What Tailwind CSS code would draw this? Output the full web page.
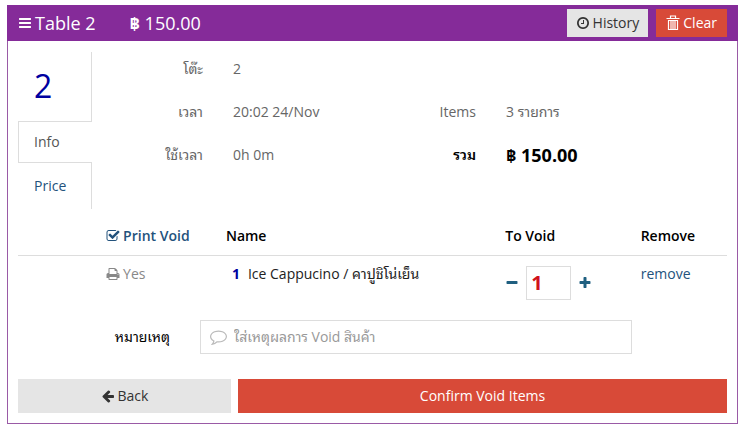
<!DOCTYPE html>
<html lang="th">
<head>
<meta charset="utf-8">
<meta name="viewport" content="width=device-width, initial-scale=1">
<title>Table 2</title>
<script src="https://cdn.jsdelivr.net/npm/@tailwindcss/browser@4"></script>
</head>
<body class="bg-white px-2 pt-[5px] font-['Open_Sans','Noto_Sans_Thai_Looped','Loma','Waree','Garuda','Noto_Sans',sans-serif] text-sm text-[#666]">
<svg class="hidden" aria-hidden="true">
  <symbol id="bars" viewBox="0 0 1792 1792"><path d="M1664 1344v128q0 26-19 45t-45 19H192q-26 0-45-19t-19-45v-128q0-26 19-45t45-19h1408q26 0 45 19t19 45zm0-512v128q0 26-19 45t-45 19H192q-26 0-45-19t-19-45V832q0-26 19-45t45-19h1408q26 0 45 19t19 45zm0-512v128q0 26-19 45t-45 19H192q-26 0-45-19t-19-45V320q0-26 19-45t45-19h1408q26 0 45 19t19 45z"/></symbol>
  <symbol id="clock" viewBox="0 0 1792 1792"><path d="M1024 544v448q0 14-9 23t-23 9H672q-14 0-23-9t-9-23v-64q0-14 9-23t23-9h224V544q0-14 9-23t23-9h64q14 0 23 9t9 23zm416 352q0-148-73-273t-198-198-273-73-273 73-198 198-73 273 73 273 198 198 273 73 273-73 198-198 73-273zm224 0q0 209-103 385.5T1281.5 1561 896 1664t-385.5-103T231 1281.5 128 896t103-385.5T510.5 231 896 128t385.5 103T1561 510.5 1664 896z"/></symbol>
  <symbol id="check" viewBox="0 0 1792 1792"><path d="M1472 930v318q0 119-84.5 203.5T1184 1536H352q-119 0-203.5-84.5T64 1248V416q0-119 84.5-203.5T352 128h832q63 0 117 25 15 7 18 23 3 17-9 29l-49 49q-10 10-23 10-3 0-9-2-23-6-45-6H352q-66 0-113 47t-47 113v832q0 66 47 113t113 47h832q66 0 113-47t47-113v-254q0-13 9-22l64-64q10-10 23-10 6 0 12 3 20 8 20 29zm231-489l-814 814q-24 24-57 24t-57-24L345 825q-24-24-24-57t24-57l110-110q24-24 57-24t57 24l263 263 647-647q24-24 57-24t57 24l110 110q24 24 24 57t-24 57z"/></symbol>
  <symbol id="print" viewBox="0 0 1792 1792"><path d="M448 1536h896v-256H448v256zm0-640h896V512h-160q-40 0-68-28t-28-68V256H448v640zm1152 64q0-26-19-45t-45-19-45 19-19 45 19 45 45 19 45-19 19-45zm128 0v416q0 13-9.5 22.5t-22.5 9.5h-224v160q0 40-28 68t-68 28H416q-40 0-68-28t-28-68v-160H96q-13 0-22.5-9.5T64 1376V960q0-79 56.5-135.5T256 768h64V224q0-40 28-68t68-28h672q40 0 88 20t76 48l152 152q28 28 48 76t20 88v256h64q79 0 135.5 56.5T1728 960z"/></symbol>
  <symbol id="minus" viewBox="0 0 1792 1792"><path d="M1600 736v192q0 40-28 68t-68 28H288q-40 0-68-28t-28-68V736q0-40 28-68t68-28h1216q40 0 68 28t28 68z"/></symbol>
  <symbol id="plus" viewBox="0 0 1792 1792"><path d="M1600 736v192q0 40-28 68t-68 28h-416v416q0 40-28 68t-68 28H800q-40 0-68-28t-28-68v-416H288q-40 0-68-28t-28-68V736q0-40 28-68t68-28h416V224q0-40 28-68t68-28h192q40 0 68 28t28 68v416h416q40 0 68 28t28 68z"/></symbol>
  <symbol id="back" viewBox="0 0 1792 1792"><path d="M1664 896v128q0 53-32.5 90.5T1547 1152H843l293 294q38 36 38 90t-38 90l-75 76q-37 37-90 37-52 0-91-37L229 1050q-37-37-37-90 0-52 37-91l651-650q38-38 91-38 52 0 90 38l75 74q38 38 38 91t-38 91l-293 293h704q52 0 84.5 37.5T1664 896z"/></symbol>
  <symbol id="comment" viewBox="0 0 1792 1792"><path d="M896 384q-204 0-381.5 69.5T232.5 641 128 896q0 112 71.5 213.5T401 1285l87 50-27 96q-24 91-70 172 152-63 275-171l43-38 57 6q69 8 130 8 204 0 381.5-69.5t282-187.5 104.5-255-104.5-255-282-187.5T896 384zm896 512q0 174-120 321.5t-326 233-450 85.5q-70 0-145-8-198 175-460 242-49 14-114 22h-5q-15 0-27-10.5t-16-27.5v-1q-3-4-.5-12t2-10 4.5-9.5l6-9 7-8.5 8-9q7-8 31-34.5t34.5-38 31-39.5 32.5-51 27-59 26-76q-157-89-247.5-220T0 896q0-130 71-248.5t191-204.5 286-136.5T896 256t348 50.5T1530 443t191 204.5T1792 896z"/></symbol>
  <symbol id="trash" viewBox="0 0 14 16"><path d="M4.5 3V1h5v2M.5 3.5h13M2 5.5h10M2.5 5.5v9h9v-9M5 6v8M7 6v8M9 6v8" fill="none" stroke="currentColor" stroke-width="1.2"/></symbol>
</svg>
<main class="-ml-px border border-[#9a5aa6]">
  <header class="-mx-px -mt-px flex h-9 items-center bg-[#852b99] px-[11px] text-lg font-medium text-white">
    <svg class="mr-[3px] size-[14px] fill-current" aria-hidden="true"><use href="#bars"/></svg>
    <h1>Table 2</h1>
    <span class="ml-[34px]"><b>฿</b> 150.00</span>
    <div class="ml-auto flex gap-2 text-sm">
      <button class="flex h-7 items-center gap-[3px] bg-[#e5e5e5] px-[9px] font-normal text-[#333]"><svg class="size-[14px] fill-current" aria-hidden="true"><use href="#clock"/></svg>History</button>
      <button class="flex h-7 items-center gap-[3px] bg-[#d84a38] px-[10px]"><svg class="h-4 w-[14px]" aria-hidden="true"><use href="#trash"/></svg>Clear</button>
    </div>
  </header>
  <div class="px-[10px] pt-[11px] pb-[10px]">
    <section class="flex">
      <nav class="flex w-[74px] shrink-0 flex-col">
        <div class="h-[69px] border-r border-[#ddd] px-4 pt-4 text-[32px] leading-9 text-[#0000a0]">2</div>
        <a href="#info" class="flex h-[42px] items-center border border-r-0 border-[#ddd] px-[15px] text-[#555]">Info</a>
        <a href="#price" class="flex h-[46px] items-center border-r border-[#ddd] px-4 text-[#23527c]">Price</a>
      </nav>
      <dl class="grid flex-1 auto-rows-[43px] grid-cols-[111px_153fr_60px_221fr] content-start gap-x-[30px] leading-[34px]" id="info">
        <dt class="text-right">โต๊ะ</dt><dd class="col-span-3">2</dd>
        <dt class="text-right">เวลา</dt><dd>20:02 24/Nov</dd>
        <dt class="text-right">Items</dt><dd>3 รายการ</dd>
        <dt class="text-right">ใช้เวลา</dt><dd>0h 0m</dd>
        <dt class="text-right font-semibold text-black">รวม</dt><dd class="text-lg leading-[34px] font-bold text-black">฿ 150.00</dd>
      </dl>
    </section>
    <table class="mt-[9px] w-full table-fixed text-left">
      <colgroup><col class="w-[11.3%]"><col class="w-[16.9%]"><col class="w-[39.4%]"><col class="w-[19.1%]"><col></colgroup>
      <thead class="font-semibold text-black">
        <tr class="h-[37px] border-b border-[#ddd]">
          <td></td>
          <th class="px-2 font-semibold text-[#23527c]"><button class="flex items-center gap-[3px]"><svg class="size-[14px] fill-current" aria-hidden="true"><use href="#check"/></svg>Print Void</button></th>
          <th class="px-2 font-semibold">Name</th>
          <th class="px-2 font-semibold">To Void</th>
          <th class="px-2 font-semibold">Remove</th>
        </tr>
      </thead>
      <tbody class="align-top">
        <tr>
          <td></td>
          <td class="px-2 pt-2"><span class="flex items-center gap-[3px] text-[#888]"><svg class="size-[14px] fill-current" aria-hidden="true"><use href="#print"/></svg>Yes</span></td>
          <td class="px-2 pt-2 text-[#222]"><b class="mr-2 ml-[6px] text-[#0000a0]">1</b>Ice Cappucino / คาปูชิโน่เย็น</td>
          <td class="px-2 pt-[10px]">
            <div class="flex items-center gap-[7px] text-[#1f5f80]">
              <button aria-label="Decrease"><svg class="size-[14px] fill-current" aria-hidden="true"><use href="#minus"/></svg></button>
              <input aria-label="To Void" value="1" class="h-[34px] w-[45px] border border-[#ddd] px-1 text-xl font-bold text-[#d0121b]">
              <button aria-label="Increase"><svg class="size-[14px] fill-current" aria-hidden="true"><use href="#plus"/></svg></button>
            </div>
          </td>
          <td class="px-2 pt-2"><a href="#remove" class="text-[#23527c]">remove</a></td>
        </tr>
      </tbody>
    </table>
    <div class="mt-5 flex items-center text-black">
      <label for="note" class="w-[182px] pr-[30px] text-right">หมายเหตุ</label>
      <div class="flex h-[34px] w-[61%] items-center border border-[#ddd] pl-[9px]">
        <svg class="size-[17px] shrink-0 fill-[#bbb]" aria-hidden="true"><use href="#comment"/></svg>
        <input id="note" placeholder="ใส่เหตุผลการ Void สินค้า" class="h-full min-w-0 flex-1 px-[7px] outline-none placeholder:text-[#999]">
      </div>
    </div>
    <div class="mt-[25px] grid grid-cols-[213fr_489fr] gap-[7px]">
      <button class="flex h-[34px] items-center justify-center gap-[3px] bg-[#e5e5e5] text-[#333]"><svg class="size-[14px] fill-current" aria-hidden="true"><use href="#back"/></svg>Back</button>
      <button class="h-[34px] bg-[#d84a38] font-medium text-white">Confirm Void Items</button>
    </div>
  </div>
</main>
</body>
</html>
